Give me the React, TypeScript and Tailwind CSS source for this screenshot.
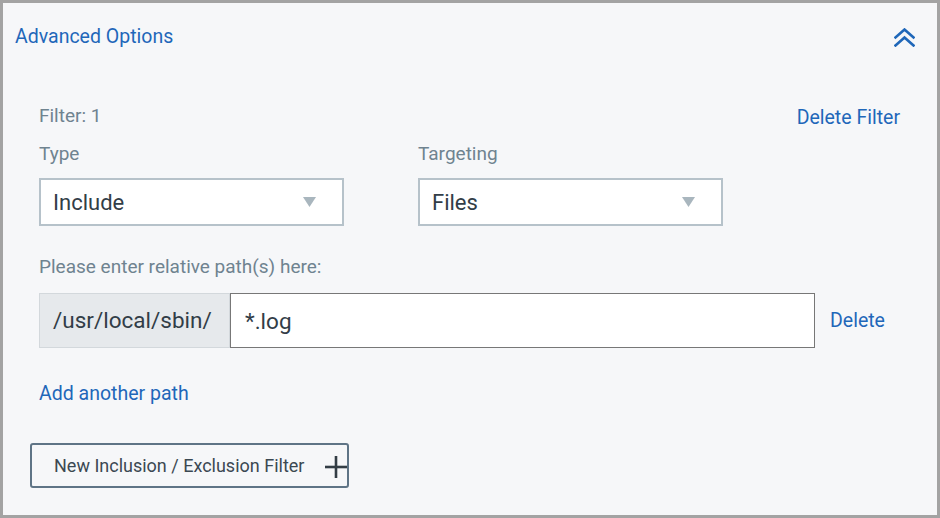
import { useState } from 'react';

const font = { fontFamily: 'Roboto, "Liberation Sans", sans-serif' };

function Caret() {
    return (
        <svg width="13" height="10" viewBox="0 0 13 10" className="shrink-0">
            <polygon points="0,0 13,0 6.5,10" fill="#a9b6be" />
        </svg>
    );
}

function SelectBox({ value }: { value: string }) {
    return (
        <div className="w-[305px] h-[48px] bg-white border-2 border-[#b6c2ca] flex items-center justify-between pl-[12px] pr-[26px]">
            <span className="text-[22px] text-[#323d47]">{value}</span>
            <Caret />
        </div>
    );
}

export default function App() {
    const [path, setPath] = useState('*.log');

    return (
        <div style={font} className="w-[940px] h-[518px] border-[3px] border-[#a3a3a3] bg-[#f6f7f9] flex flex-col">
            {/* header */}
            <div className="flex items-center justify-between pl-[12px] pr-[22px] pt-[22px] h-[46px]">
                <span className="text-[19.5px] leading-[24px] text-[#1f67b9]">Advanced Options</span>
                <svg width="21" height="19" viewBox="0 0 21 19" fill="none" stroke="#1f67b9" strokeWidth="2.6" strokeLinecap="square">
                    <polyline points="1.5,9.5 10.5,1.5 19.5,9.5" />
                    <polyline points="1.5,17.5 10.5,9.5 19.5,17.5" />
                </svg>
            </div>

            <div className="flex flex-col pl-[36px] pr-[37px] mt-[56px]">
                <div className="flex items-start justify-between">
                    <span className="text-[19px] leading-[22px] text-[#6f8390]">Filter: 1</span>
                    <span className="text-[19.5px] leading-[22px] text-[#1f67b9] mt-[2px]">Delete Filter</span>
                </div>

                <div className="flex gap-[74px] mt-[14px]">
                    <div className="flex flex-col">
                        <span className="text-[19px] leading-[22px] text-[#6f8390]">Type</span>
                        <div className="mt-[13px]">
                            <SelectBox value="Include" />
                        </div>
                    </div>
                    <div className="flex flex-col">
                        <span className="text-[19px] leading-[22px] text-[#6f8390]">Targeting</span>
                        <div className="mt-[13px]">
                            <SelectBox value="Files" />
                        </div>
                    </div>
                </div>

                <span className="text-[19px] leading-[22px] text-[#6f8390] mt-[30px]">Please enter relative path(s) here:</span>

                <div className="flex items-center mt-[15px]">
                    <div className="w-[191px] h-[55px] bg-[#e6e9ec] border border-[#d3d8dc] flex items-center pl-[13px] text-[22.5px] text-[#323d47]">
                        /usr/local/sbin/
                    </div>
                    <input
                        value={path}
                        onChange={(e) => setPath(e.target.value)}
                        className="w-[585px] h-[55px] bg-white border border-[#777] pl-[14px] text-[22.5px] text-[#323d47] outline-none"
                    />
                    <span className="ml-[15px] text-[19.5px] text-[#1f67b9]">Delete</span>
                </div>

                <span className="text-[19.5px] leading-[24px] text-[#1f67b9] mt-[34px]">Add another path</span>
            </div>

            <div className="pl-[27px] mt-[37px]">
                <button className="relative w-[319px] h-[45px] border-2 border-[#5f7486] rounded-[3px] flex items-center pl-[22px] text-[18px] text-[#3b4852]">
                    New Inclusion / Exclusion Filter
                    <svg width="22" height="22" viewBox="0 0 22 22" className="absolute right-[0px] top-[11px]" stroke="#333d45" strokeWidth="2.6">
                        <line x1="11" y1="0" x2="11" y2="22" />
                        <line x1="0" y1="11" x2="22" y2="11" />
                    </svg>
                </button>
            </div>
        </div>
    );
}
